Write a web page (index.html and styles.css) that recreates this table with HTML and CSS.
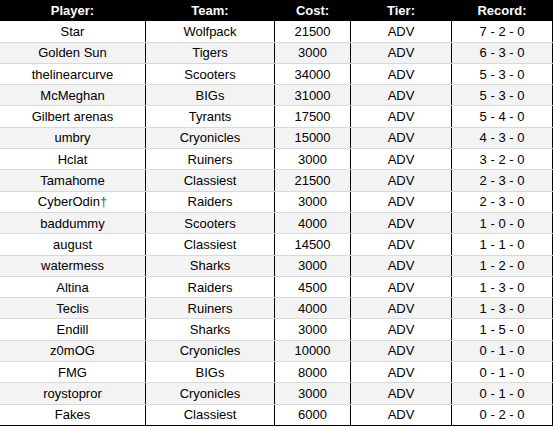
FILE: index.html
```html
<!DOCTYPE html>
<html>
<head>
<meta charset="utf-8">
<link rel="stylesheet" href="styles.css">
</head>
<body>
<div class="sheet">
  <div class="row head"><div class="c">Player:</div><div class="c">Team:</div><div class="c">Cost:</div><div class="c">Tier:</div><div class="c">Record:</div></div>
  <div class="row"><div class="c">Star</div><div class="c">Wolfpack</div><div class="c">21500</div><div class="c">ADV</div><div class="c">7 - 2 - 0</div></div>
  <div class="row alt"><div class="c">Golden Sun</div><div class="c">Tigers</div><div class="c">3000</div><div class="c">ADV</div><div class="c">6 - 3 - 0</div></div>
  <div class="row"><div class="c">thelinearcurve</div><div class="c">Scooters</div><div class="c">34000</div><div class="c">ADV</div><div class="c">5 - 3 - 0</div></div>
  <div class="row alt"><div class="c">McMeghan</div><div class="c">BIGs</div><div class="c">31000</div><div class="c">ADV</div><div class="c">5 - 3 - 0</div></div>
  <div class="row"><div class="c">Gilbert arenas</div><div class="c">Tyrants</div><div class="c">17500</div><div class="c">ADV</div><div class="c">5 - 4 - 0</div></div>
  <div class="row alt"><div class="c">umbry</div><div class="c">Cryonicles</div><div class="c">15000</div><div class="c">ADV</div><div class="c">4 - 3 - 0</div></div>
  <div class="row"><div class="c">Hclat</div><div class="c">Ruiners</div><div class="c">3000</div><div class="c">ADV</div><div class="c">3 - 2 - 0</div></div>
  <div class="row alt"><div class="c">Tamahome</div><div class="c">Classiest</div><div class="c">21500</div><div class="c">ADV</div><div class="c">2 - 3 - 0</div></div>
  <div class="row"><div class="c">CyberOdin<span class="dagger">†</span></div><div class="c">Raiders</div><div class="c">3000</div><div class="c">ADV</div><div class="c">2 - 3 - 0</div></div>
  <div class="row alt"><div class="c">baddummy</div><div class="c">Scooters</div><div class="c">4000</div><div class="c">ADV</div><div class="c">1 - 0 - 0</div></div>
  <div class="row"><div class="c">august</div><div class="c">Classiest</div><div class="c">14500</div><div class="c">ADV</div><div class="c">1 - 1 - 0</div></div>
  <div class="row alt"><div class="c">watermess</div><div class="c">Sharks</div><div class="c">3000</div><div class="c">ADV</div><div class="c">1 - 2 - 0</div></div>
  <div class="row"><div class="c">Altina</div><div class="c">Raiders</div><div class="c">4500</div><div class="c">ADV</div><div class="c">1 - 3 - 0</div></div>
  <div class="row alt"><div class="c">Teclis</div><div class="c">Ruiners</div><div class="c">4000</div><div class="c">ADV</div><div class="c">1 - 3 - 0</div></div>
  <div class="row"><div class="c">Endill</div><div class="c">Sharks</div><div class="c">3000</div><div class="c">ADV</div><div class="c">1 - 5 - 0</div></div>
  <div class="row alt"><div class="c">z0mOG</div><div class="c">Cryonicles</div><div class="c">10000</div><div class="c">ADV</div><div class="c">0 - 1 - 0</div></div>
  <div class="row"><div class="c">FMG</div><div class="c">BIGs</div><div class="c">8000</div><div class="c">ADV</div><div class="c">0 - 1 - 0</div></div>
  <div class="row alt"><div class="c">roystopror</div><div class="c">Cryonicles</div><div class="c">3000</div><div class="c">ADV</div><div class="c">0 - 1 - 0</div></div>
  <div class="row last"><div class="c">Fakes</div><div class="c">Classiest</div><div class="c">6000</div><div class="c">ADV</div><div class="c">0 - 2 - 0</div></div>
</div>
</body>
</html>
```
FILE: styles.css
```css
html, body {
  margin: 0;
  padding: 0;
  background: #ffffff;
}
.sheet {
  width: 553px;
  font-family: "Liberation Sans", Arial, sans-serif;
  font-size: 13px;
  color: #000000;
}
.row {
  display: grid;
  grid-template-columns: 146px 129px 76px 101px 101px;
  height: 21.3px;
  box-sizing: border-box;
  border-bottom: 1px solid #d9d9d9;
  background: #ffffff;
}
.row.alt {
  background: #f3f3f3;
}
.row.head {
  background: #000000;
  color: #ffffff;
  font-weight: bold;
  border-bottom-color: #000000;
}
.row.last {
  border-bottom-color: #000000;
}
.c {
  display: flex;
  align-items: center;
  justify-content: center;
  border-right: 1px solid #000000;
  white-space: nowrap;
  overflow: hidden;
}
.dagger {
  color: #3c5a8c;
}
```
